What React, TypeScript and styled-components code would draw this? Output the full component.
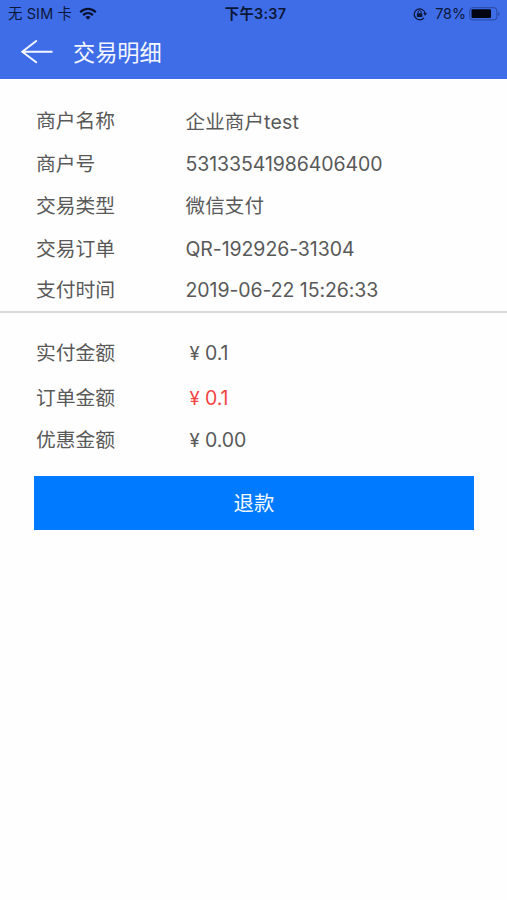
import React from 'react';
import styled, { createGlobalStyle } from 'styled-components';

const GlobalStyle = createGlobalStyle`
  * { box-sizing: border-box; }
  body {
    margin: 0;
    background: #fff;
    font-family: Inter, "Noto Sans CJK SC", sans-serif;
  }
`;

const Screen = styled.div`
  width: 100%;
  min-height: 900px;
  background: #fefefe;
`;

const Header = styled.header`
  height: 79px;
  background: #3f6de8;
`;

const StatusBar = styled.div`
  display: grid;
  grid-template-columns: 1fr auto 1fr;
  align-items: center;
  height: 27px;
  padding: 0 6px 0 8px;
  color: #0c1738;
  line-height: 27px;
  white-space: nowrap;
`;

const StatusGroup = styled.div<{ $end?: boolean }>`
  display: flex;
  align-items: center;
  justify-content: ${(p) => (p.$end ? 'flex-end' : 'flex-start')};
`;

const Carrier = styled.span`
  margin-right: 7px;
  font-size: 14.4px;
  letter-spacing: 0.15px;
`;

const Clock = styled.span`
  padding-left: 2px;
  font-size: 14.4px;
  font-weight: 600;
  letter-spacing: 0.25px;
`;

const Percent = styled.span`
  margin: 0 3px 0 8px;
  font-size: 14.3px;
`;

const NavBar = styled.div`
  display: flex;
  align-items: center;
  height: 50px;
  padding-left: 21px;
`;

const BackButton = styled.button`
  display: flex;
  width: 52px;
  padding: 0;
  border: 0;
  background: none;
`;

const Title = styled.h1`
  margin: 0;
  padding-top: 2px;
  color: #f4f7ff;
  font-size: 22.2px;
  font-weight: 400;
  line-height: 32px;
`;

const Section = styled.section<{ $height: number; $divided?: boolean }>`
  height: ${(p) => p.$height}px;
  padding: 1px 36px 0;
  border-bottom: ${(p) => (p.$divided ? '2px solid #dadada' : '0')};
`;

const Row = styled.div<{ $gap: number }>`
  display: grid;
  grid-template-columns: 149.5px 1fr;
  height: ${(p) => p.$gap + 30}px;
  padding-top: ${(p) => p.$gap}px;
  color: #595959;
  font-size: 19.8px;
  line-height: 30px;
  white-space: nowrap;
`;

const Value = styled.span<{ $shift?: number; $red?: boolean; $tracking?: number }>`
  padding-top: ${(p) => p.$shift ?? 0}px;
  color: ${(p) => (p.$red ? '#f44545' : 'inherit')};
  font-size: 19.5px;
  letter-spacing: ${(p) => p.$tracking ?? -0.08}px;
`;

const Currency = styled.span`
  display: inline-block;
  width: 19.5px;
  padding-left: 4px;
  font-size: 18.5px;
`;

const RefundButton = styled.button`
  display: block;
  width: 440px;
  height: 54px;
  margin-left: 34px;
  padding: 2px 0 0;
  border: 0;
  background: #007aff;
  color: #f5faff;
  font-family: inherit;
  font-size: 20.4px;
  line-height: 52px;
`;

const WifiIcon = () => (
  <svg width="18" height="14" viewBox="0 0 18 14" fill="none" stroke="#07112f" strokeWidth="2.3">
    <path d="M1.2 5.2C5.7 .8 12.3 .8 16.8 5.2" />
    <path d="M4.1 8.1C7 5.4 11 5.4 13.9 8.1" />
    <path d="M6.4 10.1Q9 7.9 11.6 10.1L9 12.8Z" fill="#07112f" stroke="none" />
  </svg>
);

const RotationLockIcon = () => (
  <svg width="14" height="14" viewBox="0 0 14 14" fill="none" stroke="#0c1738" strokeWidth="1.2">
    <path d="M11 10.8A5.5 5.5 0 1 1 12.1 6.2" />
    <path d="M10.2 6.1H14L12.1 8.7Z" fill="#0c1738" stroke="none" />
    <rect x="3.9" y="6.2" width="5.4" height="3.8" rx=".5" fill="#0c1738" stroke="none" />
    <path d="M5.1 6.5V5.1a1.5 1.5 0 0 1 3 0v1.4" strokeWidth="1" />
  </svg>
);

const BatteryIcon = () => (
  <svg width="32" height="14" viewBox="0 0 32 14" fill="none">
    <rect x=".7" y=".7" width="27.2" height="12.2" rx="3" stroke="#2946a0" />
    <rect x="2.5" y="2.3" width="19.5" height="8.8" rx="1" fill="#020510" />
    <path d="M29.3 4.4Q32 6.8 29.3 9.2Z" fill="#2946a0" />
  </svg>
);

const BackIcon = () => (
  <svg width="32" height="24" viewBox="0 0 32 24" fill="none" stroke="#f4f7ff" strokeWidth="1.9" strokeLinecap="round">
    <path d="M15.2 1.1L1.3 11.7L15.2 22.3M1.5 11.7H30.8" />
  </svg>
);

const details = [
  { label: '商户名称', value: '企业商户test', gap: 26, shift: 1, tracking: 0.15 },
  { label: '商户号', value: '53133541986406400', gap: 13 },
  { label: '交易类型', value: '微信支付', gap: 12, tracking: 0.15 },
  { label: '交易订单', value: 'QR-192926-31304', gap: 13 },
  { label: '支付时间', value: '2019-06-22 15:26:33', gap: 11 },
];

const amounts = [
  { label: '实付金额', value: '0.1', gap: 24 },
  { label: '订单金额', value: '0.1', gap: 15, red: true },
  { label: '优惠金额', value: '0.00', gap: 12 },
];

export default function App() {
  return (
    <Screen>
      <GlobalStyle />
      <Header>
        <StatusBar>
          <StatusGroup>
            <Carrier>无 SIM 卡</Carrier>
            <WifiIcon />
          </StatusGroup>
          <Clock>下午3:37</Clock>
          <StatusGroup $end>
            <RotationLockIcon />
            <Percent>78%</Percent>
            <BatteryIcon />
          </StatusGroup>
        </StatusBar>
        <NavBar>
          <BackButton aria-label="返回"><BackIcon /></BackButton>
          <Title>交易明细</Title>
        </NavBar>
      </Header>
      <Section $height={234} $divided>
        {details.map((d) => (
          <Row key={d.label} $gap={d.gap}>
            <span>{d.label}</span>
            <Value $shift={d.shift} $tracking={d.tracking}>{d.value}</Value>
          </Row>
        ))}
      </Section>
      <Section $height={163}>
        {amounts.map((a) => (
          <Row key={a.label} $gap={a.gap}>
            <span>{a.label}</span>
            <Value $red={a.red}>
              <Currency>¥</Currency>
              {a.value}
            </Value>
          </Row>
        ))}
      </Section>
      <RefundButton>退款</RefundButton>
    </Screen>
  );
}
